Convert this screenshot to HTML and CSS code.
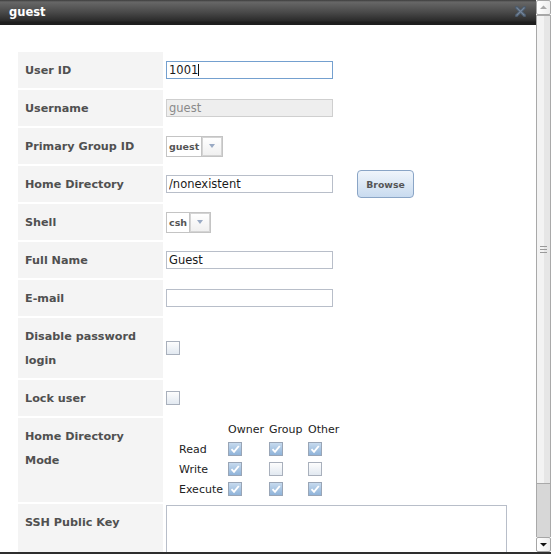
FILE: index.html
```html
<!DOCTYPE html>
<html>
<head>
<meta charset="utf-8">
<title>guest</title>
<link rel="stylesheet" href="styles.css">
</head>
<body>
<div class="window">
  <div class="main">
    <div class="titlebar">
      <span class="title">guest</span>
      <svg class="close" viewBox="0 0 11 11" width="11" height="11">
        <path d="M1.5 1.5L9.5 9.5M9.5 1.5L1.5 9.5" stroke="#4c5b6c" stroke-width="3.2" stroke-linecap="square" fill="none"/>
        <path d="M1.5 1.5L9.5 9.5M9.5 1.5L1.5 9.5" stroke="#74859a" stroke-width="1.2" fill="none"/>
      </svg>
    </div>
    <div class="content">
      <div class="form">
        <div class="label">User ID</div>
        <div class="value"><span class="field"><input class="input focus" type="text" value="1001"><span class="caret"></span></span></div>

        <div class="label">Username</div>
        <div class="value"><input class="input disabled" type="text" value="guest" disabled></div>

        <div class="label">Primary Group ID</div>
        <div class="value"><span class="select"><span class="select-val">guest</span><span class="select-btn"><span class="tri"></span></span></span></div>

        <div class="label">Home Directory</div>
        <div class="value"><input class="input" type="text" value="/nonexistent"><button class="btn" type="button">Browse</button></div>

        <div class="label">Shell</div>
        <div class="value"><span class="select"><span class="select-val">csh</span><span class="select-btn"><span class="tri"></span></span></span></div>

        <div class="label">Full Name</div>
        <div class="value"><input class="input" type="text" value="Guest"></div>

        <div class="label">E-mail</div>
        <div class="value"><input class="input" type="text" value=""></div>

        <div class="label">Disable password login</div>
        <div class="value"><span class="cb"></span></div>

        <div class="label">Lock user</div>
        <div class="value"><span class="cb"></span></div>

        <div class="label">Home Directory Mode</div>
        <div class="value perms-cell">
          <div class="perms">
            <span></span><span class="ph">Owner</span><span class="ph">Group</span><span class="ph">Other</span>
            <span class="pl">Read</span>
            <span><span class="cb on"><svg viewBox="0 0 12 12"><path d="M2.5 6.2L5 8.8L9.8 3"/></svg></span></span>
            <span><span class="cb on"><svg viewBox="0 0 12 12"><path d="M2.5 6.2L5 8.8L9.8 3"/></svg></span></span>
            <span><span class="cb on"><svg viewBox="0 0 12 12"><path d="M2.5 6.2L5 8.8L9.8 3"/></svg></span></span>
            <span class="pl">Write</span>
            <span><span class="cb on"><svg viewBox="0 0 12 12"><path d="M2.5 6.2L5 8.8L9.8 3"/></svg></span></span>
            <span><span class="cb"></span></span>
            <span><span class="cb"></span></span>
            <span class="pl">Execute</span>
            <span><span class="cb on"><svg viewBox="0 0 12 12"><path d="M2.5 6.2L5 8.8L9.8 3"/></svg></span></span>
            <span><span class="cb on"><svg viewBox="0 0 12 12"><path d="M2.5 6.2L5 8.8L9.8 3"/></svg></span></span>
            <span><span class="cb on"><svg viewBox="0 0 12 12"><path d="M2.5 6.2L5 8.8L9.8 3"/></svg></span></span>
          </div>
        </div>

        <div class="label">SSH Public Key</div>
        <div class="value top"><textarea class="textarea"></textarea></div>
      </div>
    </div>
  </div>
  <div class="scrollbar">
    <div class="sb-btn"><svg viewBox="0 0 13 13" width="13" height="13"><path d="M3 8L6.5 4.5L10 8Z" fill="#a8a8a8"/></svg></div>
    <div class="sb-thumb"><svg class="grip" viewBox="0 0 7 7" width="7" height="7"><path d="M0 0.5H7M0 3.5H7M0 6.5H7" stroke="#9a9a9a" stroke-width="1"/></svg></div>
    <div class="sb-track"></div>
    <div class="sb-btn"><svg viewBox="0 0 13 13" width="13" height="13"><path d="M3 5L6.5 8.5L10 5Z" fill="#111"/></svg></div>
  </div>
</div>
</body>
</html>
```

FILE: styles.css
```css
* { box-sizing: border-box; }
html, body { margin: 0; padding: 0; }
body {
  width: 551px;
  height: 554px;
  overflow: hidden;
  background: #fff;
  font-family: "DejaVu Sans", Verdana, sans-serif;
  font-size: 11px;
  color: #222;
}
.window {
  display: flex;
  height: 554px;
  border-bottom: 2px solid #2e2e2e;
}
.main {
  width: 536px;
  flex: none;
  display: flex;
  flex-direction: column;
  overflow: hidden;
}
.titlebar {
  height: 25px;
  flex: none;
  display: flex;
  align-items: center;
  justify-content: space-between;
  padding: 0 10px 2px 9px;
  background: linear-gradient(to bottom, #3c3c3c 0, #676767 2px, #4a4a4a 12px, #2a2a2a 21px, #1e1e1e 22px, #1e1e1e 25px);
}
.title {
  color: #fff;
  font-weight: bold;
  font-size: 11.5px;
}
.close { display: block; }
.content {
  padding: 27px 0 0 18px;
}
.form {
  display: grid;
  grid-template-columns: 145px 1fr;
  gap: 2px;
}
.label {
  background: #f4f4f4;
  padding: 7px 7px 5px;
  line-height: 24px;
  font-weight: bold;
  font-size: 11.2px;
  color: #505050;
}
.value {
  display: flex;
  align-items: center;
  padding-left: 1px;
}
.value.top { align-items: flex-start; padding-top: 1px; }
.field { position: relative; display: block; }
.input {
  display: block;
  width: 167px;
  height: 18px;
  margin: 0;
  border: 1px solid #b8bec9;
  padding: 0 2px;
  font-family: "DejaVu Sans", Verdana, sans-serif;
  font-size: 11.5px;
  color: #1a1a1a;
  background: #fff;
  outline: none;
}
.input.focus { border-color: #74a0cf; }
.input.disabled { background: #eeeeee; border-color: #cfcfcf; color: #8a8a8a; }
.caret {
  position: absolute;
  left: 32px;
  top: 3px;
  width: 1px;
  height: 12px;
  background: #111;
}
.btn {
  margin: 0 0 0 24px;
  width: 57px;
  height: 28px;
  padding: 0;
  border: 1px solid #8aa5c6;
  border-radius: 4px;
  background: linear-gradient(to bottom, #f0f5fb, #c9dbef);
  font-family: "DejaVu Sans", Verdana, sans-serif;
  font-size: 9.3px;
  font-weight: bold;
  color: #555;
}
.select {
  display: inline-flex;
  height: 21px;
  border: 1px solid #c4c4c4;
  background: #fff;
}
.select-val {
  padding: 0 2px;
  line-height: 19px;
  font-size: 9.5px;
  font-weight: bold;
  color: #555;
  border-right: 1px solid #c4c4c4;
}
.select-btn {
  width: 20px;
  display: flex;
  align-items: center;
  justify-content: center;
  border: 1px solid #d4d4d4;
  background: linear-gradient(to bottom, #ffffff, #f0f0f0);
}
.tri {
  width: 0;
  height: 0;
  border-left: 3.5px solid transparent;
  border-right: 3.5px solid transparent;
  border-top: 4px solid #9aaac4;
}
.cb {
  display: block;
  width: 14px;
  height: 14px;
  border: 1px solid #a9b0bc;
  background: linear-gradient(to bottom, #fdfdfd, #e2e9f1);
}
.cb.on {
  border-color: #99a5b6;
  background: linear-gradient(to bottom, #c6daee, #8fb3d9);
}
.cb svg {
  display: block;
  width: 12px;
  height: 12px;
  fill: none;
  stroke: #fff;
  stroke-width: 1.9;
}
.perms-cell {
  align-items: flex-start;
  padding: 1px 0 3px 14px;
}
.perms {
  display: grid;
  grid-template-columns: 49px 41px 39px 40px;
  grid-auto-rows: 20px;
  align-items: center;
  color: #222;
}
.textarea {
  display: block;
  width: 341px;
  height: 120px;
  margin: 0;
  border: 1px solid #b8bec9;
  resize: none;
  font-family: "DejaVu Sans", Verdana, sans-serif;
  font-size: 11px;
}
.scrollbar {
  width: 15px;
  flex: none;
  display: flex;
  flex-direction: column;
  background: #fff;
}
.sb-btn {
  height: 15px;
  flex: none;
  display: flex;
  align-items: center;
  justify-content: center;
  border: 1px solid #a6a6a6;
  border-radius: 2px;
  background: linear-gradient(to right, #ffffff, #ededed);
}
.sb-thumb {
  height: 469px;
  flex: none;
  display: flex;
  align-items: center;
  justify-content: center;
  border: 1px solid #a9a9a9;
  background: linear-gradient(to right, #f3f3f3 0, #f3f3f3 50%, #e6e6e6 50%, #e6e6e6 100%);
}
.grip { display: block; }
.sb-track {
  flex: 1;
  border-left: 1px solid #a9a9a9;
  border-right: 1px solid #a9a9a9;
  background: #d7d7d7;
}
```
